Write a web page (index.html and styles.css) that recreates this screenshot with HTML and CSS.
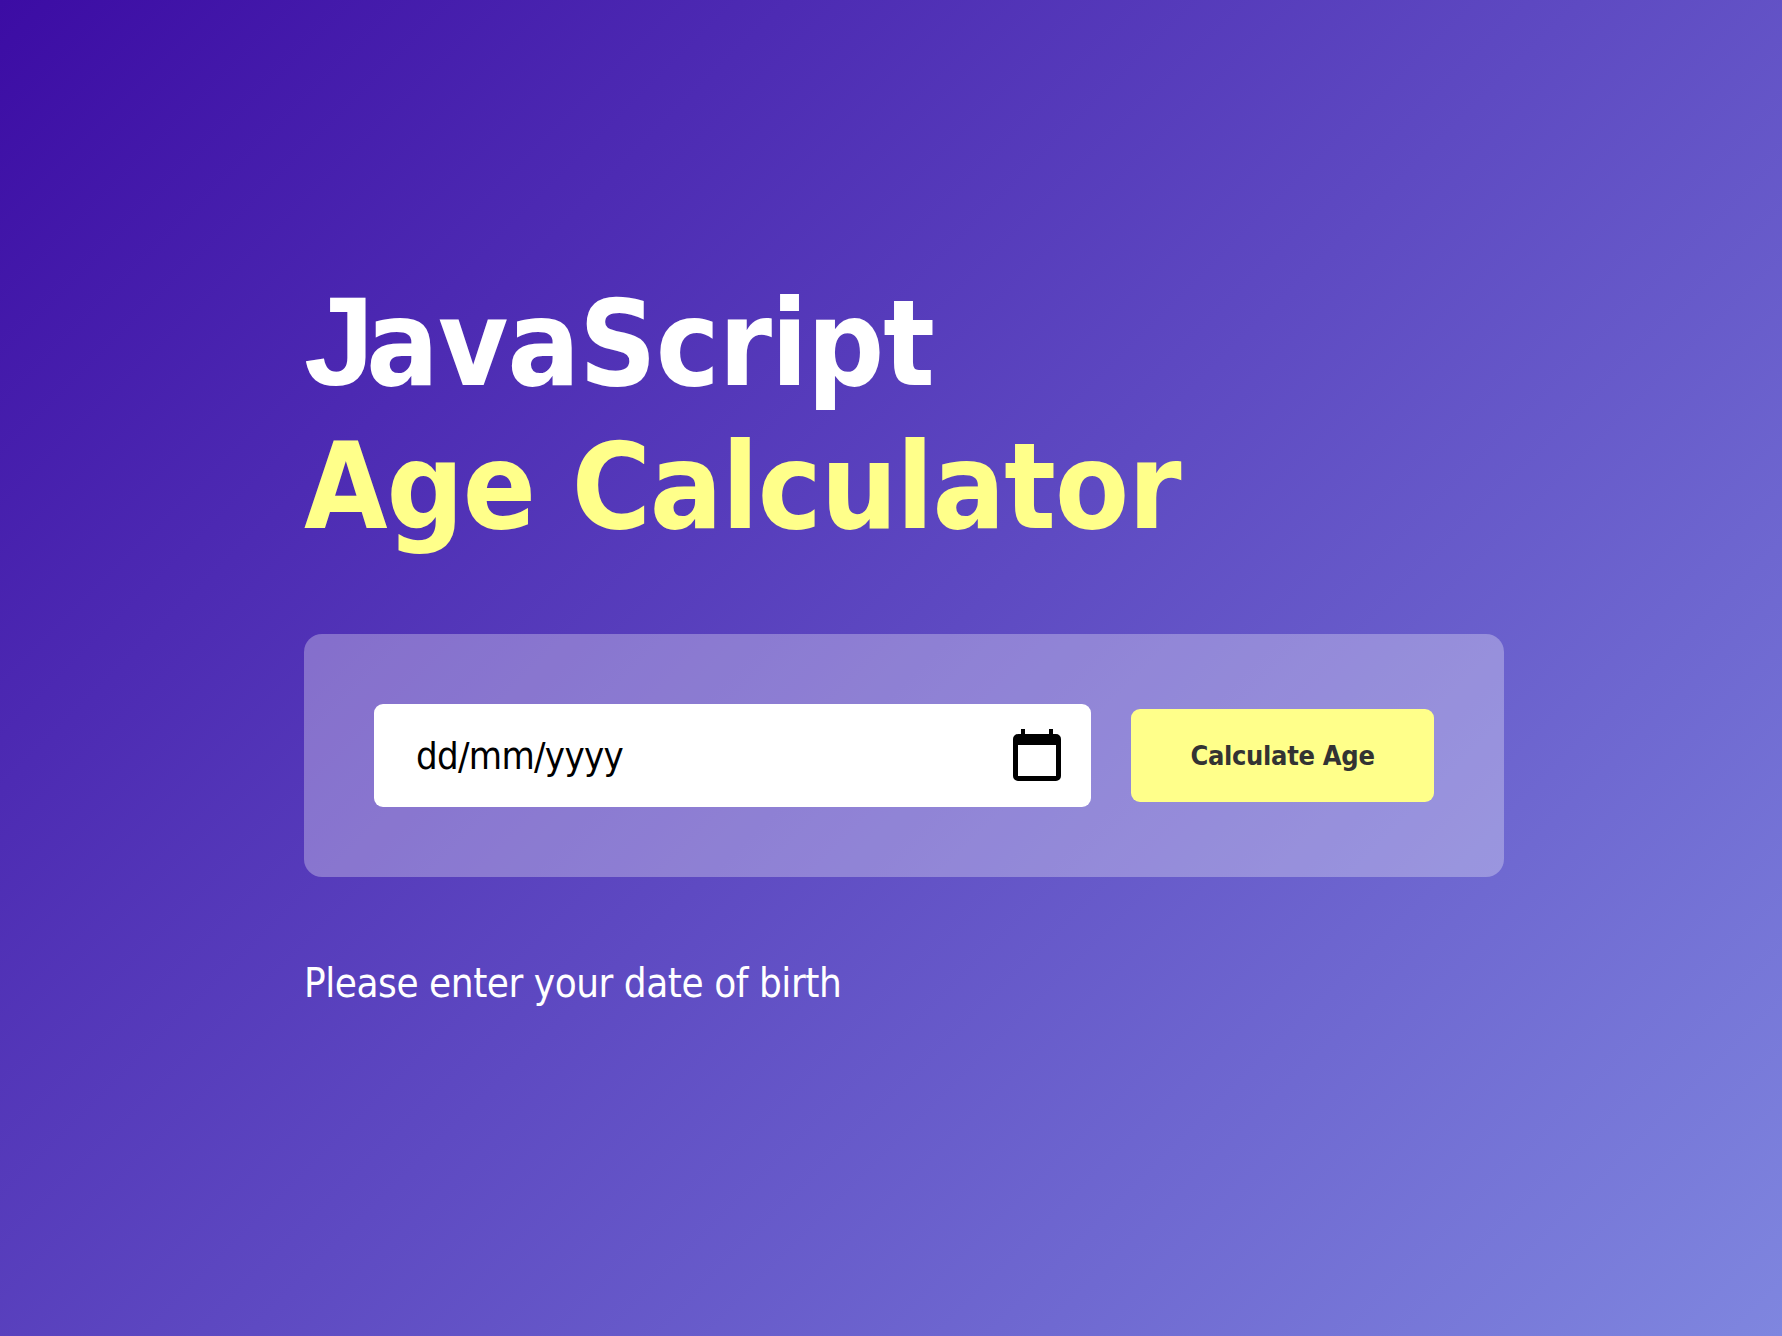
FILE: index.html
```html
<!DOCTYPE html>
<html lang="en">
<head>
    <meta charset="UTF-8">
    <meta name="viewport" content="width=device-width, initial-scale=1.0">
    <title>JavaScript Age Calculator</title>
    <link rel="stylesheet" href="styles.css">
</head>
<body>

    <div class="container">
        <h1>JavaScript<br><span>Age Calculator</span></h1>

        <div class="input-box">
            <div class="date-field">
                <input type="text" id="birthdate" placeholder="dd/mm/yyyy">
                <svg class="calendar-icon" viewBox="0 0 48 52" aria-hidden="true">
                    <path fill-rule="evenodd" d="M8 0h4v5h24V0h4v5h3a5 5 0 0 1 5 5v37a5 5 0 0 1-5 5H5a5 5 0 0 1-5-5V10a5 5 0 0 1 5-5h3zM5 16v31h38V16z"/>
                </svg>
            </div>
            <button type="button">Calculate Age</button>
        </div>

        <p class="output">Please enter your date of birth</p>
    </div>

</body>
</html>
```

FILE: styles.css
```css
* {
    box-sizing: border-box;
}

body {
    margin: 0;
    min-height: 100vh;
    font-family: "DejaVu Sans Condensed", "DejaVu Sans", sans-serif;
    background: linear-gradient(135deg, #3c0ca4, #7f86df);
}

.container {
    width: 1200px;
    margin-left: 304px;
    padding-top: 270px;
}

h1 {
    margin: 0;
    font-size: 120px;
    line-height: 143px;
    font-weight: bold;
    letter-spacing: -1px;
    color: white;
}

/* the condensed J hangs below the baseline, this one sits on it */
h1::first-letter {
    font-family: "Liberation Sans", sans-serif;
    font-size: 126px;
    letter-spacing: -8px;
}

h1 span {
    color: #ffff8a;
}

.input-box {
    display: flex;
    align-items: center;
    gap: 40px;
    margin-top: 76px;
    padding: 70px;
    background: rgba(255, 255, 255, 0.3);
    border-radius: 18px;
}

.date-field {
    flex: 1;
    display: flex;
    align-items: center;
    height: 103px;
    padding: 0 30px 0 42px;
    background: white;
    border-radius: 9px;
}

input {
    flex: 1;
    min-width: 0;
    border: none;
    outline: none;
    padding: 0;
    font-family: inherit;
    font-size: 38px;
    letter-spacing: -0.7px;
    color: black;
    background: none;
}

input::placeholder {
    color: black;
    opacity: 1;
}

.calendar-icon {
    width: 48px;
    height: 52px;
    margin-bottom: 2px;
}

button {
    width: 303px;
    height: 93px;
    border: none;
    border-radius: 9px;
    background: #ffff8a;
    color: #333;
    font-family: inherit;
    font-size: 27px;
    font-weight: bold;
    letter-spacing: -0.3px;
    cursor: pointer;
}

.output {
    margin: 83px 0 0;
    font-size: 40px;
    letter-spacing: -0.45px;
    color: white;
}
```
